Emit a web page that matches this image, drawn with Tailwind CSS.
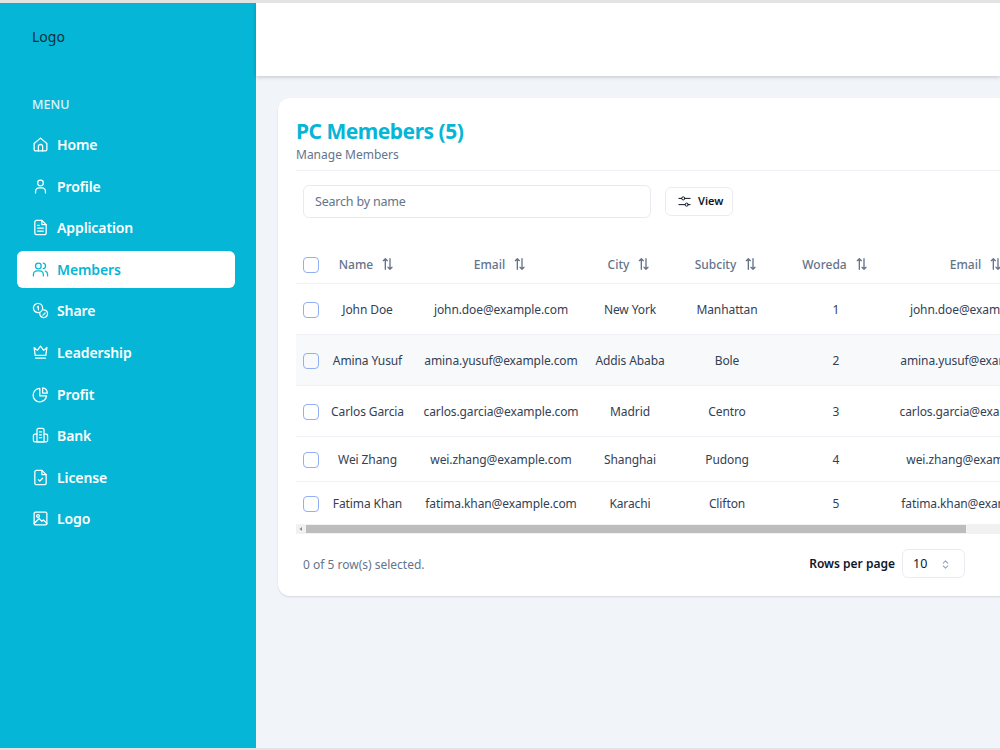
<!doctype html>
<html lang="en">
  <head>
    <meta charset="UTF-8" />
    <title>PC Members</title>
    <script src="https://cdn.jsdelivr.net/npm/@tailwindcss/browser@4"></script>
  </head>
  <body class="overflow-hidden bg-white font-['Noto_Sans',sans-serif]">
    <div class="w-[1000px] h-[750px] overflow-hidden flex flex-col border-t-[3px] border-b-2 border-[#e3e3e3]">
      <div class="flex flex-1 min-h-0">
        <!-- Sidebar -->
        <aside class="w-64 shrink-0 bg-[#06b6d6] text-white">
          <div class="pl-8 pt-[24px] h-[90px] text-[14px] leading-5 text-[#0b2f3d]">Logo</div>
          <div class="pl-8 h-[33px] pt-[2px] text-[12.5px] leading-5 font-medium text-white/85">MENU</div>
          <nav class="flex flex-col gap-[4.6px] pl-[17px] w-[235px]">
            <a class="flex items-center gap-[8px] h-[37px] pl-[15px] text-[14px] tracking-[-0.1px] font-semibold">
              <svg class="w-[17px] h-[17px]" viewBox="0 0 24 24" fill="none" stroke="currentColor" stroke-width="1.8" stroke-linecap="round" stroke-linejoin="round"><path d="M3 10.5 12 3l9 7.5V19a2 2 0 0 1-2 2H5a2 2 0 0 1-2-2z" /><path d="M9 21v-6a3 3 0 0 1 6 0v6" /></svg>
              Home
            </a>
            <a class="flex items-center gap-[8px] h-[37px] pl-[15px] text-[14px] tracking-[-0.1px] font-semibold">
              <svg class="w-[17px] h-[17px]" viewBox="0 0 24 24" fill="none" stroke="currentColor" stroke-width="1.8" stroke-linecap="round" stroke-linejoin="round"><circle cx="12" cy="7" r="4" /><path d="M5 21v-2a5 5 0 0 1 5-5h4a5 5 0 0 1 5 5v2" /></svg>
              Profile
            </a>
            <a class="flex items-center gap-[8px] h-[37px] pl-[15px] text-[14px] tracking-[-0.1px] font-semibold">
              <svg class="w-[17px] h-[17px]" viewBox="0 0 24 24" fill="none" stroke="currentColor" stroke-width="1.8" stroke-linecap="round" stroke-linejoin="round"><path d="M14 2H6a2 2 0 0 0-2 2v16a2 2 0 0 0 2 2h12a2 2 0 0 0 2-2V8z" /><path d="M14 2v6h6" /><path d="M8 13h8M8 17h8M8 9h2" /></svg>
              Application
            </a>
            <a class="flex items-center gap-[8px] h-[37px] pl-[15px] rounded-md bg-white text-[#06b6d6] text-[14px] tracking-[-0.1px] font-semibold">
              <svg class="w-[17px] h-[17px]" viewBox="0 0 24 24" fill="none" stroke="currentColor" stroke-width="1.8" stroke-linecap="round" stroke-linejoin="round"><circle cx="9" cy="7" r="4" /><path d="M2 21v-2a5 5 0 0 1 5-5h4a5 5 0 0 1 5 5v2" /><path d="M16 3.1a4 4 0 0 1 0 7.8M19 14.2a5 5 0 0 1 3 4.8v2" /></svg>
              Members
            </a>
            <a class="flex items-center gap-[8px] h-[37px] pl-[15px] text-[14px] tracking-[-0.1px] font-semibold">
              <svg class="w-[17px] h-[17px]" viewBox="0 0 24 24" fill="none" stroke="currentColor" stroke-width="1.8" stroke-linecap="round" stroke-linejoin="round"><circle cx="8.5" cy="8.5" r="6.5" /><path d="M16 11a5.5 5.5 0 1 1-5 5" /><path d="M7.5 7l1.5-1v5M15.5 18.5l3-3" /></svg>
              Share
            </a>
            <a class="flex items-center gap-[8px] h-[37px] pl-[15px] text-[14px] tracking-[-0.1px] font-semibold">
              <svg class="w-[17px] h-[17px]" viewBox="0 0 24 24" fill="none" stroke="currentColor" stroke-width="1.8" stroke-linecap="round" stroke-linejoin="round"><path d="M3 5l4.5 4L12 3l4.500 6L21 5l-1.500 11h-15z" /><path d="M5 20h14" /></svg>
              Leadership
            </a>
            <a class="flex items-center gap-[8px] h-[37px] pl-[15px] text-[14px] tracking-[-0.1px] font-semibold">
              <svg class="w-[17px] h-[17px]" viewBox="0 0 24 24" fill="none" stroke="currentColor" stroke-width="1.8" stroke-linecap="round" stroke-linejoin="round"><path d="M11 3.500a9.500 9.500 0 1 0 9.500 10.500H11z" /><path d="M15 2.500A7 7 0 0 1 21.500 10H15z" /></svg>
              Profit
            </a>
            <a class="flex items-center gap-[8px] h-[37px] pl-[15px] text-[14px] tracking-[-0.1px] font-semibold">
              <svg class="w-[17px] h-[17px]" viewBox="0 0 24 24" fill="none" stroke="currentColor" stroke-width="1.8" stroke-linecap="round" stroke-linejoin="round"><path d="M7 21V4a2 2 0 0 1 2-2h6a2 2 0 0 1 2 2v17z" /><path d="M7 10H4a2 2 0 0 0-2 2v7a2 2 0 0 0 2 2h16a2 2 0 0 0 2-2v-7a2 2 0 0 0-2-2h-3" /><path d="M10.500 7h3M10.500 11h3M10.500 15h3" /></svg>
              Bank
            </a>
            <a class="flex items-center gap-[8px] h-[37px] pl-[15px] text-[14px] tracking-[-0.1px] font-semibold">
              <svg class="w-[17px] h-[17px]" viewBox="0 0 24 24" fill="none" stroke="currentColor" stroke-width="1.8" stroke-linecap="round" stroke-linejoin="round"><path d="M14 2H6a2 2 0 0 0-2 2v16a2 2 0 0 0 2 2h12a2 2 0 0 0 2-2V8z" /><path d="M14 2v6h6" /><path d="M9 15l2 2 4-4" /></svg>
              License
            </a>
            <a class="flex items-center gap-[8px] h-[37px] pl-[15px] text-[14px] tracking-[-0.1px] font-semibold">
              <svg class="w-[17px] h-[17px]" viewBox="0 0 24 24" fill="none" stroke="currentColor" stroke-width="1.8" stroke-linecap="round" stroke-linejoin="round"><rect x="3" y="3" width="18" height="18" rx="2" /><circle cx="8.500" cy="8.500" r="2" /><path d="M3 19l7-7 4 4 2-2 5 5" /></svg>
              Logo
            </a>
          </nav>
        </aside>

        <!-- Main -->
        <div class="flex-1 min-w-0 flex flex-col bg-[#f1f4f9]">
          <header class="h-[73px] shrink-0 bg-white shadow-[0_1px_4px_rgba(0,0,0,0.2)]"></header>
          <main class="pt-[22px] pl-[22px]">
            <section class="w-[900px] h-[498px] pl-[18px] bg-white rounded-xl shadow-[0_1px_2px_rgba(0,0,0,0.12)]">
              <div class="pt-[18px] pb-[6px] border-b border-[#eef1f5]">
                <h1 class="text-[21px] tracking-[-0.5px] leading-[30px] font-bold text-[#06b6d6]">PC Memebers (5)</h1>
                <p class="text-[12px] leading-[18px] text-[#64748b]">Manage Members</p>
              </div>

              <div class="flex items-center gap-[14px] ml-[7px] mt-[14px] h-[33px]">
                <div class="flex items-center w-[348px] h-[33px] pl-[11px] pt-[2px] bg-white rounded-md border border-[#e7ebf1] text-[12.5px] tracking-[-0.2px] text-[#64748b]">Search by name</div>
                <button class="flex items-center gap-[6px] w-[68px] h-[29px] pl-[11px] bg-white rounded-md border border-[#e9edf2] text-[11px] font-semibold text-[#0f172a]">
                  <svg class="w-[15px] h-[15px]" viewBox="0 0 24 24" fill="none" stroke="currentColor" stroke-width="1.6" stroke-linecap="round"><path d="M3 7h4.500M12.500 7H21M3 17h10M18 17h3" /><circle cx="10" cy="7" r="2.500" /><circle cx="15.500" cy="17" r="2.500" /></svg>
                  View
                </button>
              </div>

              <table class="table-fixed border-collapse w-[770px] mt-[30px] text-[12px] tracking-[-0.1px] text-[#334155] text-center [&_td]:pt-[2px] [&_td]:px-0">
                <thead class="text-[#64748b]">
                  <tr class="h-[35px] border-b border-[#eef1f5]">
                    <th class="w-[27px] p-0 pl-[7px] text-left"><span class="block w-4 h-4 rounded-[4px] border-[1.5px] border-[#8fb0f5]"></span></th>
                    <th class="w-[89px] p-0 font-medium tracking-normal"><span class="inline-flex items-center gap-[7px]">Name <svg class="w-4 h-4 -mt-[2px]" viewBox="0 0 24 24" fill="none" stroke="currentColor" stroke-width="2" stroke-linecap="round" stroke-linejoin="round"><path d="M8 20V4M5 7l3-3 3 3M15 4v16M12 17l3 3 3-3" /></svg></span></th>
                    <th class="w-[178px] p-0 font-medium tracking-normal"><span class="inline-flex items-center gap-[7px]">Email <svg class="w-4 h-4 -mt-[2px]" viewBox="0 0 24 24" fill="none" stroke="currentColor" stroke-width="2" stroke-linecap="round" stroke-linejoin="round"><path d="M8 20V4M5 7l3-3 3 3M15 4v16M12 17l3 3 3-3" /></svg></span></th>
                    <th class="w-[80px] p-0 font-medium tracking-normal"><span class="inline-flex items-center gap-[7px]">City <svg class="w-4 h-4 -mt-[2px]" viewBox="0 0 24 24" fill="none" stroke="currentColor" stroke-width="2" stroke-linecap="round" stroke-linejoin="round"><path d="M8 20V4M5 7l3-3 3 3M15 4v16M12 17l3 3 3-3" /></svg></span></th>
                    <th class="w-[114px] p-0 font-medium tracking-normal"><span class="inline-flex items-center gap-[7px]">Subcity <svg class="w-4 h-4 -mt-[2px]" viewBox="0 0 24 24" fill="none" stroke="currentColor" stroke-width="2" stroke-linecap="round" stroke-linejoin="round"><path d="M8 20V4M5 7l3-3 3 3M15 4v16M12 17l3 3 3-3" /></svg></span></th>
                    <th class="w-[104px] p-0 font-medium tracking-normal"><span class="inline-flex items-center gap-[7px]">Woreda <svg class="w-4 h-4 -mt-[2px]" viewBox="0 0 24 24" fill="none" stroke="currentColor" stroke-width="2" stroke-linecap="round" stroke-linejoin="round"><path d="M8 20V4M5 7l3-3 3 3M15 4v16M12 17l3 3 3-3" /></svg></span></th>
                    <th class="w-[178px] p-0 font-medium tracking-normal"><span class="inline-flex items-center gap-[7px]">Email <svg class="w-4 h-4 -mt-[2px]" viewBox="0 0 24 24" fill="none" stroke="currentColor" stroke-width="2" stroke-linecap="round" stroke-linejoin="round"><path d="M8 20V4M5 7l3-3 3 3M15 4v16M12 17l3 3 3-3" /></svg></span></th>
                  </tr>
                </thead>
                <tbody>
                  <tr class="h-[51px] border-b border-[#eef1f5]">
                    <td class="pl-[7px]!"><span class="block w-4 h-4 rounded-[4px] border-[1.5px] border-[#8fb0f5]"></span></td>
                    <td>John Doe</td><td>john.doe@example.com</td><td>New York</td><td>Manhattan</td><td>1</td><td>john.doe@example.com</td>
                  </tr>
                  <tr class="h-[51px] border-b border-[#eef1f5] bg-[#f8f9fb]">
                    <td class="pl-[7px]!"><span class="block w-4 h-4 rounded-[4px] border-[1.5px] border-[#8fb0f5]"></span></td>
                    <td>Amina Yusuf</td><td>amina.yusuf@example.com</td><td>Addis Ababa</td><td>Bole</td><td>2</td><td>amina.yusuf@example.com</td>
                  </tr>
                  <tr class="h-[51px] border-b border-[#eef1f5]">
                    <td class="pl-[7px]!"><span class="block w-4 h-4 rounded-[4px] border-[1.5px] border-[#8fb0f5]"></span></td>
                    <td>Carlos Garcia</td><td>carlos.garcia@example.com</td><td>Madrid</td><td>Centro</td><td>3</td><td>carlos.garcia@example.com</td>
                  </tr>
                  <tr class="h-[45px] border-b border-[#eef1f5]">
                    <td class="pl-[7px]!"><span class="block w-4 h-4 rounded-[4px] border-[1.5px] border-[#8fb0f5]"></span></td>
                    <td>Wei Zhang</td><td>wei.zhang@example.com</td><td>Shanghai</td><td>Pudong</td><td>4</td><td>wei.zhang@example.com</td>
                  </tr>
                  <tr class="h-[43px]">
                    <td class="pl-[7px]!"><span class="block w-4 h-4 rounded-[4px] border-[1.5px] border-[#8fb0f5]"></span></td>
                    <td>Fatima Khan</td><td>fatima.khan@example.com</td><td>Karachi</td><td>Clifton</td><td>5</td><td>fatima.khan@example.com</td>
                  </tr>
                </tbody>
              </table>

              <!-- horizontal scrollbar -->
              <div class="flex items-center w-[770px] h-[10px] bg-[#f1f1f1]">
                <svg class="w-[10px] h-[10px] shrink-0 text-[#8a8a8a]" viewBox="0 0 10 10" fill="currentColor"><path d="M6 3v4L3.500 5z" /></svg>
                <div class="w-[660px] h-[8px] bg-[#bdbdbd]"></div>
              </div>

              <div class="flex items-center justify-between w-[669px] pl-[7px] mt-[15px]">
                <p class="pt-[2px] text-[12px] text-[#64748b]">0 of 5 row(s) selected.</p>
                <div class="flex items-center gap-[7px]">
                  <span class="pt-[1px] text-[12px] font-semibold text-[#0f172a]">Rows per page</span>
                  <div class="flex items-center justify-between w-[63px] h-[29px] pl-[10px] pr-[13px] pt-[1px] rounded-md border border-[#e9edf2] text-[12.5px] text-[#0f172a]">
                    10
                    <svg class="w-[11px] h-[11px] text-[#94a3b8]" viewBox="0 0 24 24" fill="none" stroke="currentColor" stroke-width="2.200" stroke-linecap="round" stroke-linejoin="round"><path d="M7 9l5-5 5 5M7 15l5 5 5-5" /></svg>
                  </div>
                </div>
              </div>
            </section>
          </main>
        </div>
      </div>
    </div>
  </body>
</html>
